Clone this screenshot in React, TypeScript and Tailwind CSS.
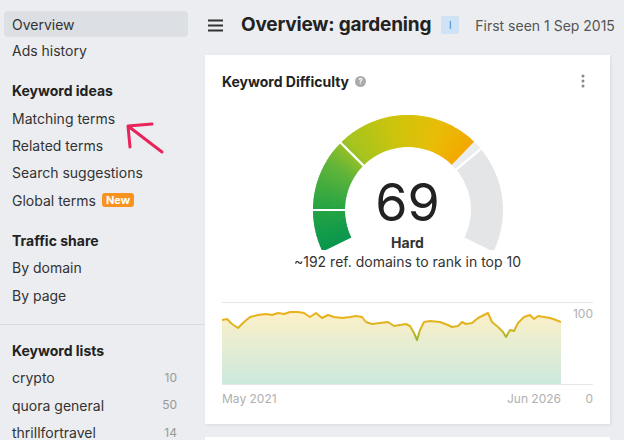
import React from "react";

const FONT = { fontFamily: "Inter, 'Noto Sans', sans-serif" };

const LINE: [number, number][] = [
  [222, 320], [227, 319], [232, 324], [238, 328], [244, 322], [250, 317], [258, 315],
  [266, 314], [272, 315], [278, 313], [284, 314], [290, 312], [298, 312], [304, 313],
  [310, 317], [316, 313], [322, 318], [328, 315], [334, 317], [342, 318], [350, 317],
  [356, 316], [362, 317], [366, 322], [372, 324], [380, 323], [388, 322], [394, 326],
  [400, 325], [406, 324], [410, 326], [414, 333], [417, 340], [420, 330], [424, 322],
  [430, 321], [440, 322], [448, 325], [452, 327], [458, 326], [462, 322], [466, 324],
  [472, 323], [478, 318], [484, 315], [488, 313], [492, 322], [498, 327], [503, 332],
  [506, 337], [510, 330], [514, 331], [518, 323], [524, 317], [530, 315], [534, 319],
  [538, 316], [544, 317], [550, 318], [556, 320], [561, 322],
];

const STOPS: [number, number[]][] = [
  [-116, [8, 150, 78]],
  [-90, [36, 164, 68]],
  [-60, [96, 180, 58]],
  [-40, [166, 196, 31]],
  [-10, [204, 196, 12]],
  [20, [232, 189, 8]],
  [44, [244, 168, 0]],
];

function colorAt(a: number) {
  for (let i = 0; i < STOPS.length - 1; i++) {
    const [a1, c1] = STOPS[i];
    const [a2, c2] = STOPS[i + 1];
    if (a >= a1 && a <= a2) {
      const t = (a - a1) / (a2 - a1);
      const c = c1.map((v, k) => Math.round(v + (c2[k] - v) * t));
      return `rgb(${c[0]},${c[1]},${c[2]})`;
    }
  }
  return "rgb(244,168,0)";
}

function pt(a: number, r: number) {
  const rad = (a * Math.PI) / 180;
  return [100 + r * Math.sin(rad), 100 - r * Math.cos(rad)];
}

function sector(a1: number, a2: number, r1: number, r2: number) {
  const [x1, y1] = pt(a1, r2);
  const [x2, y2] = pt(a2, r2);
  const [x3, y3] = pt(a2, r1);
  const [x4, y4] = pt(a1, r1);
  const large = a2 - a1 > 180 ? 1 : 0;
  return `M${x1} ${y1} A${r2} ${r2} 0 ${large} 1 ${x2} ${y2} L${x3} ${y3} A${r1} ${r1} 0 ${large} 0 ${x4} ${y4} Z`;
}

function Gauge() {
  const steps = [];
  for (let a = -116; a < 44; a += 1) {
    steps.push(
      <path key={a} d={sector(a, Math.min(a + 1.6, 44), 63, 95)} fill={colorAt(a + 0.5)} />
    );
  }
  const sep = (a: number) => {
    const [x1, y1] = pt(a, 61);
    const [x2, y2] = pt(a, 97);
    return <line x1={x1} y1={y1} x2={x2} y2={y2} stroke="#fff" strokeWidth={2.2} />;
  };
  return (
    <div className="relative mx-auto h-[140px] w-[200px]">
      <svg width="200" height="140" viewBox="0 0 200 140">
        <path d={sector(44, 116, 63, 95)} fill="#e4e5e7" />
        <path d={sector(44, 50, 63, 95)} fill="#ebeced" />
        {steps}
        {sep(-90)}
        {sep(-45)}
        {sep(50)}
      </svg>
      <div className="absolute inset-x-0 top-[67px] flex flex-col items-center">
        <span className="text-[52px] leading-[52px] text-[#222]">69</span>
        <span className="mt-[5px] text-[14px] font-bold leading-[18px] text-[#333]">Hard</span>
      </div>
    </div>
  );
}

function Chart() {
  const d = LINE.map(([x, y], i) => `${i ? "L" : "M"}${x - 222} ${y - 302}`).join(" ");
  const area = `${d} L339 82 L0 82 Z`;
  return (
    <div className="mt-[31px]">
      <div className="flex">
        <svg width="339" height="83" viewBox="0 0 339 83">
          <defs>
            <linearGradient id="fill" x1="0" y1="0" x2="0" y2="1">
              <stop offset="0" stopColor="#fdf0c8" />
              <stop offset="1" stopColor="#cbe9dd" />
            </linearGradient>
            <linearGradient id="stroke" gradientUnits="userSpaceOnUse" x1="0" y1="10" x2="0" y2="40">
              <stop offset="0" stopColor="#ebb21c" />
              <stop offset="0.5" stopColor="#dcb520" />
              <stop offset="1" stopColor="#8cb82f" />
            </linearGradient>
          </defs>
          <line x1="0" y1="0.5" x2="339" y2="0.5" stroke="#e6e7e9" />
          <path d={area} fill="url(#fill)" />
          <line x1="0" y1="82.5" x2="339" y2="82.5" stroke="#e6e7e9" />
          <path d={d} fill="none" stroke="url(#stroke)" strokeWidth={2} strokeLinejoin="round" />
        </svg>
        <div className="flex h-[83px] w-[32px] flex-col border-y border-[#e6e7e9]">
          <span className="mt-[3px] text-right text-[12px] leading-[16px] text-[#b0b0b0]">100</span>
        </div>
      </div>
      <div className="mt-[6px] flex text-[12px] leading-[16px] text-[#b0b0b0]">
        <div className="flex w-[339px] justify-between">
          <span>May 2021</span>
          <span>Jun 2026</span>
        </div>
        <span className="w-[32px] text-right">0</span>
      </div>
    </div>
  );
}

const LISTS = [
  { name: "crypto", count: 10 },
  { name: "quora general", count: 50 },
  { name: "thrillfortravel", count: 14 },
];

function NavItem({ children }: { children: React.ReactNode }) {
  return <div className="flex h-[27.3px] items-center px-[8px] text-[14px] text-[#333]">{children}</div>;
}

function Heading({ children }: { children: React.ReactNode }) {
  return (
    <div className="mt-[13px] flex h-[27.3px] items-center px-[8px] text-[14px] font-bold text-[#222]">
      {children}
    </div>
  );
}

export default function App() {
  return (
    <div className="flex h-[440px] w-[624px] overflow-hidden bg-[#ebedf0]" style={FONT}>
      <aside className="relative w-[205px] shrink-0 pt-[11px]">
        <div className="px-[4px] pr-[17px]">
          <div className="flex h-[26px] items-center rounded-[4px] bg-[#dcdfe4] px-[8px] text-[14px] text-[#333]">
            Overview
          </div>
          <NavItem>Ads history</NavItem>
          <Heading>Keyword ideas</Heading>
          <NavItem>Matching terms</NavItem>
          <NavItem>Related terms</NavItem>
          <NavItem>Search suggestions</NavItem>
          <NavItem>
            Global terms
            <span className="ml-[6px] rounded-[3px] bg-[#f7931e] px-[4px] text-[11px] font-bold leading-[14px] text-white">
              New
            </span>
          </NavItem>
          <Heading>Traffic share</Heading>
          <NavItem>By domain</NavItem>
          <NavItem>By page</NavItem>
        </div>
        <div className="mt-[15px] border-t border-[#dadce0]" />
        <div className="px-[4px] pr-[20px]">
          <div className="mt-[12px] flex h-[27.3px] items-center px-[8px] text-[14px] font-bold text-[#222]">
            Keyword lists
          </div>
          {LISTS.map((l) => (
            <div key={l.name} className="flex h-[27.5px] items-center justify-between px-[8px] text-[14px] text-[#333]">
              <span>{l.name}</span>
              <span className="text-[12px] text-[#999]">{l.count}</span>
            </div>
          ))}
        </div>
        <svg className="absolute left-[120px] top-[116px]" width="50" height="42" viewBox="0 0 50 42">
          <path
            d="M42 36 L8 10 M8 10 L32 8 M8 10 L10 31"
            fill="none"
            stroke="#e8245c"
            strokeWidth={3}
            strokeLinecap="round"
          />
        </svg>
      </aside>

      <main className="min-w-0 flex-1">
        <header className="flex h-[50px] items-center whitespace-nowrap pl-[3px]">
          <svg width="15" height="13" viewBox="0 0 15 13" className="shrink-0">
            <rect x="0" y="0.5" width="15" height="2" fill="#333" />
            <rect x="0" y="5.5" width="15" height="2" fill="#333" />
            <rect x="0" y="10.5" width="15" height="2" fill="#333" />
          </svg>
          <h1 className="ml-[18px] shrink-0 text-[19px] font-bold tracking-[-0.2px] text-[#222]">
            Overview: gardening
          </h1>
          <span className="ml-[10px] flex h-[18px] w-[18px] shrink-0 items-center justify-center rounded-[2px] bg-[#cfe2f6] text-[11px] text-[#4a90d9]">
            I
          </span>
          <span className="ml-[16px] shrink-0 text-[14px] text-[#555]">First seen 1 Sep 2015</span>
        </header>

        <section className="mt-[5px] w-[405px] bg-white px-[17px] pb-[17px] pt-[16px] shadow-[1px_1px_3px_rgba(0,0,0,0.08)]">
          <div className="flex h-[20px] items-center justify-between">
            <div className="flex items-center">
              <span className="text-[14px] font-bold text-[#222]">Keyword Difficulty</span>
              <span className="ml-[6px] flex h-[11px] w-[11px] items-center justify-center rounded-full bg-[#aaa] text-[8px] font-bold text-white">
                ?
              </span>
            </div>
            <svg width="4" height="14" viewBox="0 0 4 14" className="mr-[8px]">
              <circle cx="2" cy="2" r="1.5" fill="#888" />
              <circle cx="2" cy="7" r="1.5" fill="#888" />
              <circle cx="2" cy="12" r="1.5" fill="#888" />
            </svg>
          </div>
          <div className="mt-[19px]">
            <Gauge />
          </div>
          <p className="mt-[3px] text-center text-[14px] leading-[18px] text-[#333]">
            ~192 ref. domains to rank in top 10
          </p>
          <Chart />
        </section>
        <div className="mt-[13px] h-[20px] w-[405px] bg-white" />
      </main>
    </div>
  );
}
